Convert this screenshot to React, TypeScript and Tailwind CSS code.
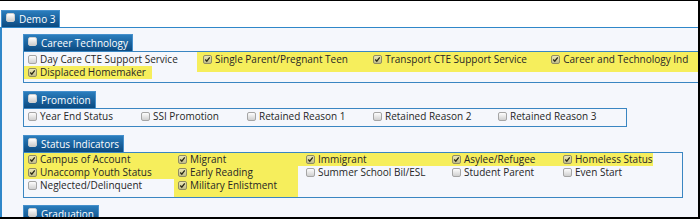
import React from 'react';

// one checkbox, grey when empty, olive with a tick when set
function Box({ checked = false }: { checked?: boolean }) {
  return (
    <span
      className={`flex h-[9px] w-[9px] shrink-0 items-center justify-center rounded-[2px] border ${
        checked
          ? 'border-[#8f8c62] bg-linear-to-b from-[#ebe7b4] to-[#c2be8a]'
          : 'border-[#a5a5a5] bg-linear-to-b from-[#fdfdfd] to-[#d0d0d0]'
      }`}
    >
      {checked && (
        <svg viewBox="0 0 9 9" className="h-[7px] w-[7px]">
          <path d="M1.6 4.6 L3.6 6.6 L7.4 1.8" fill="none" stroke="#2a2a18" strokeWidth="1.7" />
        </svg>
      )}
    </span>
  );
}

function Tab({ label }: { label: string }) {
  return (
    <div className="flex h-[17px] w-fit items-start border border-b-0 border-[#4690cc] bg-linear-to-b from-[#2a7dbd] to-[#0b4a81] px-[4px]">
      <span className="mt-[2px] h-[9px] w-[9px] rounded-[2px] border border-[#cfcfcf] bg-linear-to-b from-white to-[#cdcdcd]" />
      <span className="ml-[4px] pt-[2px] text-[10px] leading-[13px] text-white">{label}</span>
    </div>
  );
}

interface ItemProps {
  label: string;
  checked?: boolean;
  hl?: boolean;
  className?: string;
}

function Item({ label, checked = false, hl = false, className = '' }: ItemProps) {
  return (
    <div
      className={`flex h-[13px] items-center gap-[3px] whitespace-nowrap leading-[13px] ${
        hl ? 'bg-[#f6ee5c]' : ''
      } ${className}`}
    >
      <Box checked={checked} />
      <span>{label}</span>
    </div>
  );
}

export default function App() {
  return (
    <div className="h-[219px] w-[700px] overflow-hidden border-t border-r-2 border-b-2 border-black bg-white font-['Open_Sans',sans-serif] text-[10px] text-[#262626]">
      <div className="pt-[9px]">
        <div className="ml-[1px]">
          <Tab label="Demo 3" />
        </div>
        <div className="h-[300px] w-[760px] border-t border-l-2 border-[#2f87c9] bg-[#f5f7fc] pt-[6px] pl-[21px]">
          {/* Career Technology */}
          <Tab label="Career Technology" />
          <div className="flex h-[32px] w-[720px] border border-[#3a86c2]">
            <div className="flex w-[176px] flex-col pt-[1px]">
              <Item label="Day Care CTE Support Service" className="pl-[4px]" />
              <Item label="Displaced Homemaker" checked hl className="w-[128px] pl-[4px]" />
            </div>
            <div className="h-[20px] w-[173px] bg-[#f6ee5c] pt-[1px] pl-[6px]">
              <Item label="Single Parent/Pregnant Teen" checked />
            </div>
            <div className="h-[20px] w-[181px] bg-[#f6ee5c] pt-[1px] pl-[6px]">
              <Item label="Transport CTE Support Service" checked />
            </div>
            <div className="h-[20px] w-[200px] bg-[#f6ee5c] pt-[1px] pl-[6px]">
              <Item label="Career and Technology Ind" checked />
            </div>
          </div>

          {/* Promotion */}
          <div className="mt-[8px]">
            <Tab label="Promotion" />
          </div>
          <div className="flex h-[19px] w-[604px] border border-[#3a86c2] pt-[1px]">
            <Item label="Year End Status" className="w-[113px] pl-[4px]" />
            <Item label="SSI Promotion" className="w-[106px] pl-[4px]" />
            <Item label="Retained Reason 1" className="w-[126px] pl-[4px]" />
            <Item label="Retained Reason 2" className="w-[125px] pl-[4px]" />
            <Item label="Retained Reason 3" className="w-[132px] pl-[4px]" />
          </div>

          {/* Status Indicators */}
          <div className="mt-[8px]">
            <Tab label="Status Indicators" />
          </div>
          <div className="flex h-[46px] w-[660px] border border-[#3a86c2]">
            <div className="flex w-[150px] flex-col">
              <Item label="Campus of Account" checked hl className="pl-[4px]" />
              <Item label="Unaccomp Youth Status" checked hl className="pl-[4px]" />
              <Item label="Neglected/Delinquent" className="pl-[4px]" />
            </div>
            <div className="flex w-[124px] flex-col bg-[#f6ee5c]">
              <Item label="Migrant" checked className="pl-[4px]" />
              <Item label="Early Reading" checked className="pl-[4px]" />
              <Item label="Military Enlistment" checked className="pl-[4px]" />
            </div>
            <div className="flex w-[150px] flex-col">
              <Item label="Immigrant" checked hl className="pl-[8px]" />
              <Item label="Summer School Bil/ESL" className="pl-[8px]" />
            </div>
            <div className="flex w-[111px] flex-col">
              <Item label="Asylee/Refugee" checked hl className="pl-[4px]" />
              <Item label="Student Parent" className="pl-[4px]" />
            </div>
            <div className="flex w-[94px] flex-col">
              <Item label="Homeless Status" checked hl className="pl-[4px]" />
              <Item label="Even Start" className="pl-[4px]" />
            </div>
          </div>

          {/* Graduation */}
          <div className="mt-[7px]">
            <Tab label="Graduation" />
          </div>
        </div>
      </div>
    </div>
  );
}
